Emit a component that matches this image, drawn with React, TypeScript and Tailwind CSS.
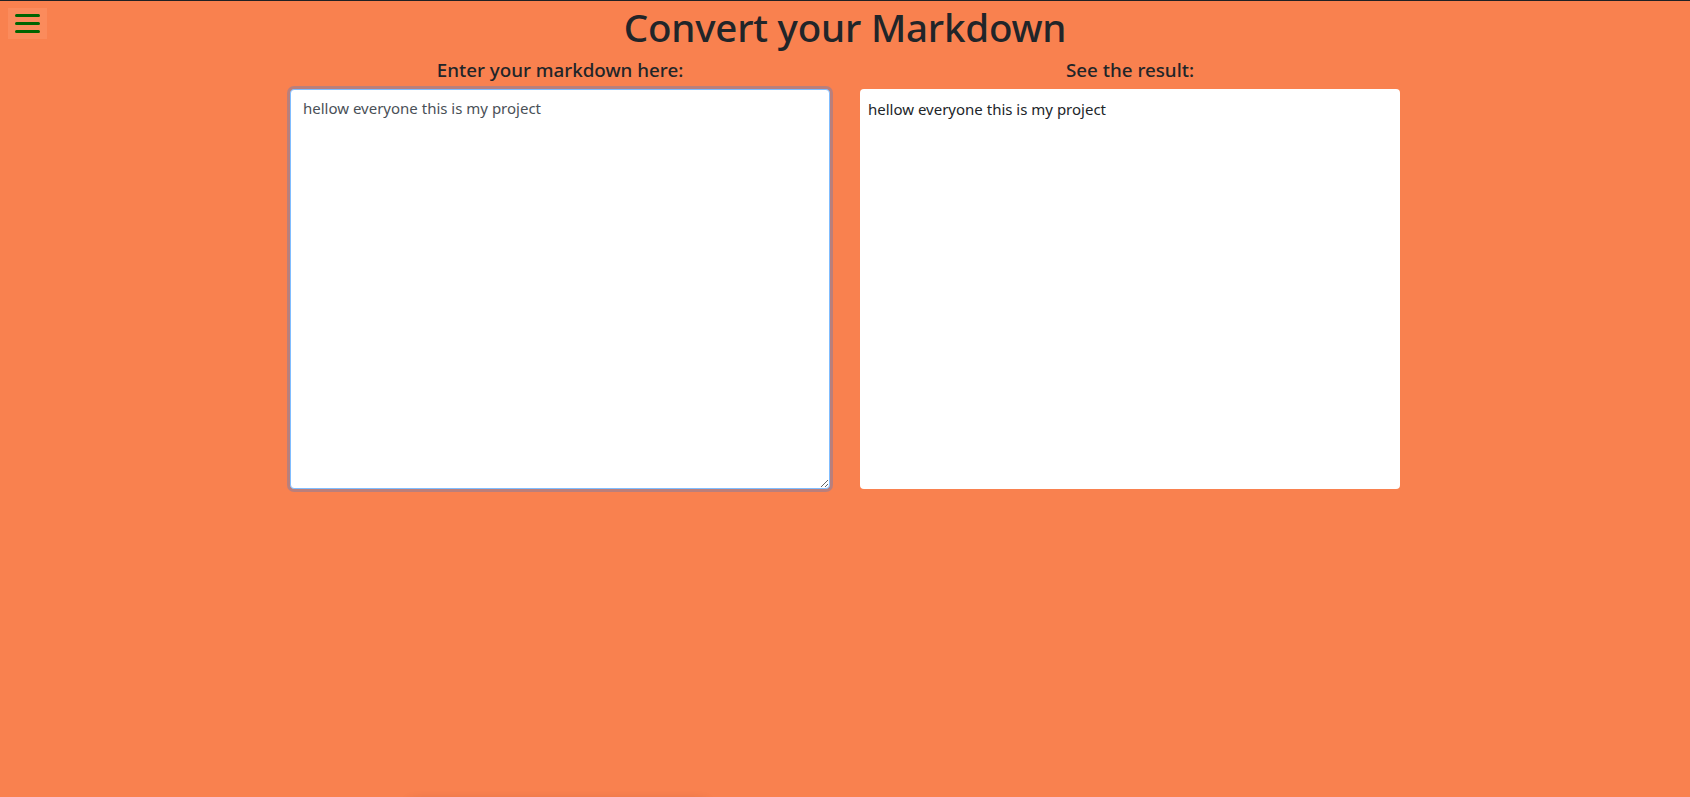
import React from "react";

export default function App() {
  const text = "hellow everyone this is my project";
  return (
    <div
      className="relative h-[797px] w-full overflow-hidden border-t border-[#202124] bg-[#f9814f] text-[#212529]"
      style={{ fontFamily: '"Noto Sans", "Open Sans", sans-serif' }}
    >
      <button className="absolute left-[8px] top-[7px] flex h-[31px] w-[39px] flex-col items-center justify-center gap-[4.5px] bg-[#fb8b5c]">
        <span className="block h-[3.5px] w-[25px] rounded-full bg-[#006400]" />
        <span className="block h-[3.5px] w-[25px] rounded-full bg-[#006400]" />
        <span className="block h-[3.5px] w-[25px] rounded-full bg-[#006400]" />
      </button>

      <h1 className="mt-[2px] text-center text-[38.5px] font-medium leading-[48px] tracking-[-0.2px]">
        Convert your Markdown
      </h1>

      <div className="mx-auto grid w-[1140px] grid-cols-2">
        <div className="flex flex-col px-[15px]">
          <h5 className="mb-[7px] mt-[7px] text-center text-[18.8px] font-medium leading-[24px]">
            Enter your markdown here:
          </h5>
          <textarea
            defaultValue={text}
            className="h-[400px] w-full rounded border border-[#80bdff] bg-white px-3 py-1.5 text-[15px] leading-6 text-[#495057] shadow-[0_0_0_3px_rgba(0,123,255,0.25)] outline-none"
          />
        </div>
        <div className="flex flex-col px-[15px]">
          <h5 className="mb-[7px] mt-[7px] text-center text-[18.8px] font-medium leading-[24px]">
            See the result:
          </h5>
          <div className="h-[400px] w-full rounded bg-white px-2 py-2 text-[15px] leading-6 text-[#212529]">
            <p>{text}</p>
          </div>
        </div>
      </div>

      <div className="absolute left-[410px] top-[802px] h-[40px] w-[296px] rounded bg-[#f9814f] shadow-[0_0_12px_rgba(0,0,0,0.25)]" />
    </div>
  );
}
